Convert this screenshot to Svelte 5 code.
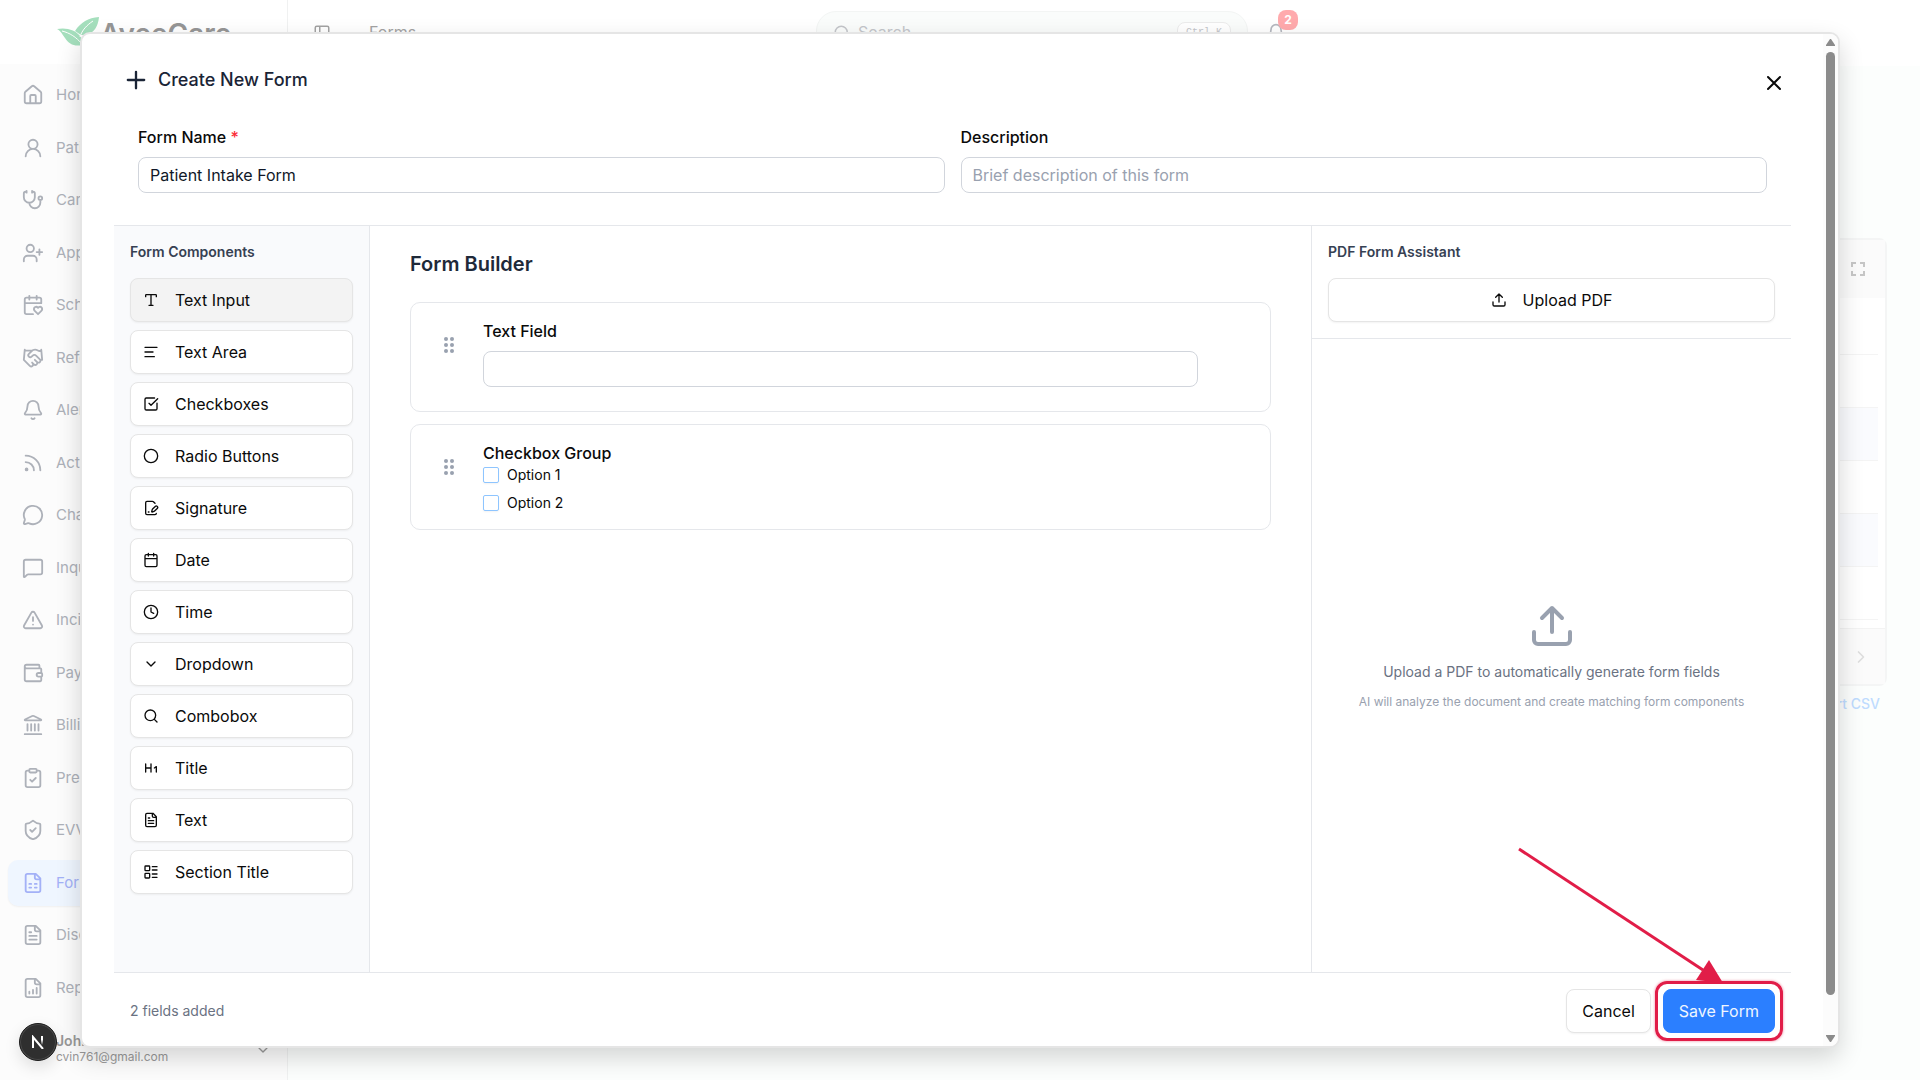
<script>
  const filePage = 'M15 2H6a2 2 0 0 0-2 2v16a2 2 0 0 0 2 2h12a2 2 0 0 0 2-2V7Z M14 2v4a2 2 0 0 0 2 2h4';
  const fileText = filePage + ' M10 9H8 M16 13H8 M16 17H8';
  const bell =
    'M10.268 21a2 2 0 0 0 3.464 0 M3.262 15.326A1 1 0 0 0 4 17h16a1 1 0 0 0 .74-1.673C19.41 13.956 18 12.499 18 8A6 6 0 0 0 6 8c0 4.499-1.411 5.956-2.738 7.326';
  const search = 'M19 11a8 8 0 1 1-16 0a8 8 0 0 1 16 0 M21 21l-4.34-4.34';
  const chevronDown = 'M6 9l6 6 6-6';
  const upload = 'M12 3v12 M17 8l-5-5-5 5 M21 15v4a2 2 0 0 1-2 2H5a2 2 0 0 1-2-2v-4';

  const nav = [
    { label: 'Home', d: 'M15 21v-8a1 1 0 0 0-1-1h-4a1 1 0 0 0-1 1v8 M3 10a2 2 0 0 1 .709-1.528l7-5.999a2 2 0 0 1 2.582 0l7 5.999A2 2 0 0 1 21 10v9a2 2 0 0 1-2 2H5a2 2 0 0 1-2-2z' },
    { label: 'Patients', d: 'M17 8a5 5 0 1 1-10 0a5 5 0 0 1 10 0 M20 21a8 8 0 0 0-16 0' },
    { label: 'Caregivers', d: 'M11 2v2 M5 2v2 M5 3H4a2 2 0 0 0-2 2v4a6 6 0 0 0 12 0V5a2 2 0 0 0-2-2h-1 M8 15a6 6 0 0 0 12 0v-3 M22 10a2 2 0 1 1-4 0a2 2 0 0 1 4 0' },
    { label: 'Applicants', d: 'M16 21v-2a4 4 0 0 0-4-4H6a4 4 0 0 0-4 4v2 M13 7a4 4 0 1 1-8 0a4 4 0 0 1 8 0 M19 8v6 M22 11h-6' },
    { label: 'Schedule', d: 'M3 10h18V6a2 2 0 0 0-2-2H5a2 2 0 0 0-2 2v14a2 2 0 0 0 2 2h7 M8 2v4 M16 2v4 M21.29 14.7a2.43 2.43 0 0 0-2.65-.52c-.3.12-.57.3-.8.53l-.34.34-.35-.34a2.43 2.43 0 0 0-2.65-.53c-.3.12-.56.3-.79.53-.95.94-1 2.53.2 3.74L17.5 22l3.6-3.55c1.2-1.21 1.14-2.8.19-3.74Z' },
    { label: 'Referrals', d: 'M11 17l2 2a1 1 0 1 0 3-3 M14 14l2.5 2.5a1 1 0 1 0 3-3l-3.88-3.88a3 3 0 0 0-4.24 0l-.88.88a1 1 0 1 1-3-3l2.81-2.81a5.79 5.79 0 0 1 7.06-.87l.47.28a2 2 0 0 0 1.42.25L21 4 M21 3l1 11h-2 M3 3 2 14l6.5 6.5a1 1 0 1 0 3-3 M3 4h8' },
    { label: 'Alerts', d: bell },
    { label: 'Activity', d: 'M4 11a9 9 0 0 1 9 9 M4 4a16 16 0 0 1 16 16 M6 19a1 1 0 1 1-2 0a1 1 0 0 1 2 0' },
    { label: 'Chat', d: 'M2.992 16.342a2 2 0 0 1 .094 1.167l-1.065 3.29a1 1 0 0 0 1.236 1.168l3.413-.998a2 2 0 0 1 1.099.092 10 10 0 1 0-4.777-4.719' },
    { label: 'Inquiries', d: 'M22 17a2 2 0 0 1-2 2H6.828a2 2 0 0 0-1.414.586l-2.202 2.202A.71.71 0 0 1 2 21.286V5a2 2 0 0 1 2-2h16a2 2 0 0 1 2 2z' },
    { label: 'Incidents', d: 'M21.73 18l-8-14a2 2 0 0 0-3.48 0l-8 14A2 2 0 0 0 4 21h16a2 2 0 0 0 1.73-3 M12 9v4 M12 17h.01' },
    { label: 'Payroll', d: 'M19 7V4a1 1 0 0 0-1-1H5a2 2 0 0 0 0 4h15a1 1 0 0 1 1 1v4h-3a2 2 0 0 0 0 4h3a1 1 0 0 0 1-1v-2a1 1 0 0 0-1-1 M3 5v14a2 2 0 0 0 2 2h15a1 1 0 0 0 1-1v-4' },
    { label: 'Billing', d: 'M10 18v-7 M11.12 2.198a2 2 0 0 1 1.76.006l7.866 3.847c.476.233.31.949-.22.949H3.474c-.53 0-.695-.716-.22-.949z M14 18v-7 M18 18v-7 M3 22h18 M6 18v-7' },
    { label: 'Prescriptions', d: 'M9 2h6a1 1 0 0 1 1 1v2a1 1 0 0 1-1 1H9a1 1 0 0 1-1-1V3a1 1 0 0 1 1-1z M16 4h2a2 2 0 0 1 2 2v14a2 2 0 0 1-2 2H6a2 2 0 0 1-2-2V6a2 2 0 0 1 2-2h2 M9 14l2 2 4-4' },
    { label: 'EVV', d: 'M20 13c0 5-3.5 7.5-7.66 8.95a1 1 0 0 1-.67-.01C7.5 20.5 4 18 4 13V6a1 1 0 0 1 1-1c2 0 4.5-1.2 6.24-2.72a1.17 1.17 0 0 1 1.52 0C14.51 3.81 17 5 19 5a1 1 0 0 1 1 1z M9 12l2 2 4-4' },
    { label: 'Forms', active: true, d: filePage + ' M8 13h2 M14 13h2 M8 17h2 M14 17h2' },
    { label: 'Discharges', d: fileText },
    { label: 'Reports', d: filePage + ' M8 18v-2 M12 18v-4 M16 18v-6' }
  ];

  const components = [
    { label: 'Text Input', d: 'M12 4v16 M4 7V5a1 1 0 0 1 1-1h14a1 1 0 0 1 1 1v2 M9 20h6' },
    { label: 'Text Area', d: 'M21 5H3 M15 12H3 M17 19H3' },
    { label: 'Checkboxes', d: 'M21 10.656V19a2 2 0 0 1-2 2H5a2 2 0 0 1-2-2V5a2 2 0 0 1 2-2h12.344 M9 11l3 3L22 4' },
    { label: 'Radio Buttons', d: 'M22 12a10 10 0 1 1-20 0a10 10 0 0 1 20 0' },
    { label: 'Signature', d: 'M18 5l-2.414-2.414A2 2 0 0 0 14.172 2H6a2 2 0 0 0-2 2v16a2 2 0 0 0 2 2h12a2 2 0 0 0 2-2 M21.378 12.626a1 1 0 0 0-3.004-3.004l-4.01 4.012a2 2 0 0 0-.506.854l-.837 2.87a.5.5 0 0 0 .62.62l2.87-.837a2 2 0 0 0 .854-.506z M8 18h1' },
    { label: 'Date', d: 'M8 2v4 M16 2v4 M5 4h14a2 2 0 0 1 2 2v14a2 2 0 0 1-2 2H5a2 2 0 0 1-2-2V6a2 2 0 0 1 2-2z M3 10h18' },
    { label: 'Time', d: 'M22 12a10 10 0 1 1-20 0a10 10 0 0 1 20 0 M12 6v6l4 2' },
    { label: 'Dropdown', d: chevronDown },
    { label: 'Combobox', d: search },
    { label: 'Title', d: 'M4 12h8 M4 18V6 M12 18V6 M17 12l3-2v8' },
    { label: 'Text', d: fileText },
    { label: 'Section Title', d: 'M4 3h5a1 1 0 0 1 1 1v5a1 1 0 0 1-1 1H4a1 1 0 0 1-1-1V4a1 1 0 0 1 1-1z M4 14h5a1 1 0 0 1 1 1v5a1 1 0 0 1-1 1H4a1 1 0 0 1-1-1v-5a1 1 0 0 1 1-1z M14 4h7 M14 9h7 M14 15h7 M14 20h7' }
  ];

  let selected = $state('Text Input');
  let formName = $state('Patient Intake Form');
  let description = $state('');
</script>

{#snippet icon(d, size)}
  <svg class="icon" width={size} height={size} viewBox="0 0 24 24" aria-hidden="true"><path {d} /></svg>
{/snippet}

{#snippet grip()}
  <svg class="grip" width="20" height="20" viewBox="0 0 20 20" aria-hidden="true">
    <circle cx="7" cy="4" r="2" /><circle cx="13" cy="4" r="2" />
    <circle cx="7" cy="10" r="2" /><circle cx="13" cy="10" r="2" />
    <circle cx="7" cy="16" r="2" /><circle cx="13" cy="16" r="2" />
  </svg>
{/snippet}

<div class="app">
  <aside class="sidebar">
    <div class="brand">
      <svg width="43" height="30" viewBox="0 0 43 30" aria-hidden="true">
        <path class="leaf" d="M0 12C9 10 19 13 23 19c3 4 3 7 3 9-9 2-14-1-18-7-3-4-4-7-8-9z" />
        <path class="leaf" d="M42 0c-1 10-5 18-18 18-2-1-4-3-6-4C24 5 31 1 42 0z" />
        <path class="vein" d="M5 14c8 2 14 6 20 13M36 4c-6 4-11 9-13 16" />
      </svg>
      <span>AveeCare</span>
    </div>
    <nav>
      {#each nav as item}
        <a href="#{item.label.toLowerCase()}" class:active={item.active}>
          {@render icon(item.d, 22)}<span>{item.label}</span>
        </a>
      {/each}
    </nav>
    <div class="account">
      <div class="who"><strong>John</strong><span>cvin761@gmail.com</span></div>
      {@render icon(chevronDown, 16)}
    </div>
  </aside>

  <div class="main">
    <header class="topbar">
      {@render icon('M5 3h14a2 2 0 0 1 2 2v14a2 2 0 0 1-2 2H5a2 2 0 0 1-2-2V5a2 2 0 0 1 2-2z M9 3v18', 18)}
      <span class="crumb">Forms</span>
      <div class="search">
        {@render icon(search, 18)}
        <input type="search" placeholder="Search" aria-label="Search" />
        <kbd>Ctrl K</kbd>
      </div>
      <button class="alerts" type="button" aria-label="Notifications">
        {@render icon(bell, 20)}
        <span class="badge">2</span>
      </button>
    </header>
    <div class="content">
      <section class="list">
        <div class="list-head">
          <svg width="14" height="14" viewBox="0 0 14 14" aria-hidden="true"><path d="M1 5V1h4M9 1h4v4M13 9v4H9M5 13H1V9" /></svg>
        </div>
        <div class="rows">
          {#each Array(6) as _}<div class="row"></div>{/each}
        </div>
        <div class="list-foot">{@render icon('M9 6l6 6-6 6', 20)}</div>
      </section>
      <a class="export" href="#export">Export CSV</a>
    </div>
  </div>

  <div class="overlay">
    <div class="modal" role="dialog" aria-modal="true" aria-labelledby="dialog-title">
      <div class="scroll">
        <header class="modal-head">
          <h2 id="dialog-title">{@render icon('M5 12h14 M12 5v14', 28)}Create New Form</h2>
          <button class="close" type="button" aria-label="Close">{@render icon('M18 6L6 18 M6 6l12 12', 24)}</button>
        </header>

        <div class="fields">
          <div class="field">
            <label for="form-name">Form Name <span class="required">*</span></label>
            <input id="form-name" type="text" bind:value={formName} />
          </div>
          <div class="field">
            <label for="form-description">Description</label>
            <input id="form-description" type="text" placeholder="Brief description of this form" bind:value={description} />
          </div>
        </div>

        <div class="builder">
          <section class="palette">
            <h3>Form Components</h3>
            {#each components as item}
              <button class="btn" class:selected={selected === item.label} type="button" onclick={() => (selected = item.label)}>
                {@render icon(item.d, 16)}{item.label}
              </button>
            {/each}
          </section>

          <section class="canvas">
            <h3>Form Builder</h3>
            <div class="card">
              {@render grip()}
              <div class="field card-field">
                <label for="text-field">Text Field</label>
                <input id="text-field" type="text" />
              </div>
            </div>
            <div class="card">
              {@render grip()}
              <fieldset>
                <legend>Checkbox Group</legend>
                <label><input type="checkbox" />Option 1</label>
                <label><input type="checkbox" />Option 2</label>
              </fieldset>
            </div>
          </section>

          <section class="assistant">
            <div class="assistant-head">
              <h3>PDF Form Assistant</h3>
              <button class="btn centered" type="button">{@render icon(upload, 16)}Upload PDF</button>
            </div>
            <div class="empty">
              {@render icon(upload, 48)}
              <p>Upload a PDF to automatically generate form fields</p>
              <small>AI will analyze the document and create matching form components</small>
            </div>
          </section>
        </div>

        <footer class="modal-foot">
          <span>2 fields added</span>
          <button class="btn" type="button">Cancel</button>
          <div class="callout">
            <button class="btn save" type="button">Save Form</button>
            <div class="ring"></div>
            <svg class="arrow" width="208" height="138" viewBox="0 0 208 138" aria-hidden="true">
              <path class="shaft" d="M2 2L186 123" />
              <path class="tip" d="M192 113L206 136L179 133Z" />
            </svg>
          </div>
        </footer>
      </div>
      <div class="scrollbar" aria-hidden="true">
        <svg width="9" height="7" viewBox="0 0 9 7"><path d="M4 0h1l4 6v1H0V6z" /></svg>
        <div class="track"><div class="thumb"></div></div>
        <svg width="9" height="7" viewBox="0 0 9 7"><path d="M0 0h9v1L5 7H4L0 1z" /></svg>
      </div>
    </div>
  </div>

  <div class="dev-badge">
    <svg width="14" height="14" viewBox="0 0 14 14" aria-hidden="true">
      <defs>
        <linearGradient id="fade" x1="0" y1="0" x2="0" y2="1">
          <stop offset="0.4" stop-color="#fff" /><stop offset="1" stop-color="#fff" stop-opacity="0" />
        </linearGradient>
      </defs>
      <path d="M2 13V2L12 14" fill="none" stroke="#fff" stroke-width="2" />
      <rect x="10" y="1" width="2" height="9" fill="url(#fade)" />
    </svg>
  </div>
</div>

<style>
  :global(body) {
    margin: 0;
  }
  .app,
  .app * {
    box-sizing: border-box;
  }
  .app {
    position: relative;
    display: flex;
    height: 100vh;
    overflow: hidden;
    background: #fcfefd;
    color: #0a0a0a;
    font: 400 16px/24px Inter, 'Liberation Sans', sans-serif;
  }
  button,
  input {
    font: inherit;
    color: inherit;
  }
  button {
    cursor: pointer;
  }
  h2,
  h3,
  p {
    margin: 0;
  }
  .icon {
    flex: none;
    fill: none;
    stroke: currentColor;
    stroke-width: 2;
    stroke-linecap: round;
    stroke-linejoin: round;
  }

  /* Page behind the dialog, washed out */
  .sidebar {
    display: flex;
    flex: none;
    flex-direction: column;
    width: 288px;
    border-right: 1px solid #f0f1f1;
    background: #fcfcfc;
    color: #adb1b9;
  }
  .brand {
    display: flex;
    align-items: center;
    height: 64px;
    padding-left: 57px;
    background: #fff;
    color: #969696;
    font-size: 28px;
    font-weight: 600;
  }
  .brand span {
    padding-top: 4px;
  }
  .leaf {
    fill: #a5dfbd;
  }
  .vein {
    fill: none;
    stroke: #fff;
    stroke-width: 1;
  }
  nav {
    display: flex;
    flex: 1;
    flex-direction: column;
    justify-content: space-between;
    padding: 8px 8px 0;
  }
  nav a {
    display: flex;
    gap: 12px;
    align-items: center;
    height: 46px;
    padding-left: 14px;
    border-radius: 10px;
    color: inherit;
    font-size: 15px;
    text-decoration: none;
  }
  nav a.active {
    background: #eff6ff;
    box-shadow: 0 1px 2px rgba(0, 0, 0, 0.05);
    color: #a3b1f7;
  }
  .account {
    display: flex;
    align-items: center;
    justify-content: space-between;
    height: 69px;
    padding: 8px 16px 0 56px;
    color: #999;
  }
  .who {
    display: flex;
    flex-direction: column;
    padding-bottom: 2px;
    font-size: 12px;
    line-height: 16px;
  }
  .who strong {
    font-size: 14px;
    font-weight: 600;
  }
  .main {
    display: flex;
    flex: 1;
    flex-direction: column;
    min-width: 0;
  }
  .topbar {
    display: flex;
    align-items: center;
    height: 66px;
    padding-left: 25px;
    background: #fff;
    color: #a3a3a3;
  }
  .crumb {
    flex: 0 1 485px;
    padding: 0 0 2px 38px;
  }
  .search {
    display: flex;
    flex: none;
    gap: 7px;
    align-items: center;
    width: 432px;
    height: 44px;
    padding: 0 16px;
    border: 1px solid #f3f5f4;
    border-radius: 20px;
    background: #fafcfb;
    color: #c4c6ca;
  }
  .search input {
    flex: 1;
    min-width: 0;
    padding: 0 0 2px;
    border: 0;
    background: none;
  }
  .search input::placeholder {
    color: #c4c6ca;
  }
  kbd {
    padding: 0 8px;
    border: 1px solid #ececec;
    border-radius: 8px;
    background: #fff;
    font: 10px/20px 'Liberation Mono', monospace;
  }
  .alerts {
    position: relative;
    display: flex;
    margin-left: 18px;
    padding: 0;
    border: 0;
    background: none;
    color: #b5b8bf;
  }
  .badge {
    position: absolute;
    top: -13px;
    left: 12px;
    width: 20px;
    border-radius: 8px;
    background: #ffaaad;
    color: #fff;
    font-size: 12px;
    font-weight: 700;
    line-height: 20px;
    text-align: center;
  }
  .content {
    display: flex;
    flex-direction: column;
    gap: 8px;
    padding: 172px 33px 0 32px;
  }
  .list {
    border: 2px solid #f4f5f5;
    border-radius: 8px;
    background: #fff;
  }
  .list-head {
    display: flex;
    align-items: center;
    justify-content: flex-end;
    height: 58px;
    padding-right: 20px;
    background: #fbfbfb;
    fill: none;
    stroke: #c6c6c6;
    stroke-width: 2;
  }
  .rows {
    padding: 4px 7px 8px;
  }
  .row {
    height: 53px;
    border-bottom: 1px solid #f4f4f4;
  }
  .row:nth-child(odd):not(:first-child) {
    background: #fafbfe;
  }
  .list-foot {
    display: flex;
    align-items: center;
    justify-content: flex-end;
    height: 56px;
    padding-right: 14px;
    border-top: 1px solid #f3f3f3;
    background: #fbfbfb;
    color: #dedede;
  }
  .export {
    align-self: flex-end;
    margin-right: 7px;
    color: #bfdcff;
    font-size: 14px;
    font-weight: 500;
    line-height: 20px;
    text-decoration: none;
  }

  /* Dialog */
  .overlay {
    position: absolute;
    inset: 0;
    display: flex;
    padding: 32px 80px;
  }
  .modal {
    display: flex;
    flex: 1;
    min-width: 0;
    overflow: hidden;
    border: 2px solid #e5e5e5;
    border-radius: 10px;
    background: #fff;
    box-shadow: 0 10px 24px rgba(0, 0, 0, 0.16);
  }
  .scroll {
    flex: 1;
    min-width: 0;
    padding: 32px;
    overflow: auto;
    scrollbar-width: none;
  }
  .modal-head {
    display: flex;
    align-items: flex-start;
    justify-content: space-between;
    height: 35px;
    padding: 0 5px 0 8px;
  }
  h2 {
    display: flex;
    gap: 8px;
    color: #1a2436;
    font-size: 18px;
    font-weight: 500;
    line-height: 28px;
  }
  .close {
    display: flex;
    padding: 5px 0 0;
    border: 0;
    background: none;
  }
  .fields {
    display: grid;
    grid-template-columns: 1fr 1fr;
    gap: 16px;
    padding: 24px 24px 32px;
  }
  .field {
    display: flex;
    flex-direction: column;
    gap: 8px;
  }
  .field label,
  legend {
    font-weight: 500;
  }
  .required {
    color: #fb2c36;
  }
  .field input {
    width: 100%;
    height: 36px;
    padding: 0 11px;
    border: 1px solid #d1d5dc;
    border-radius: 8px;
    background: #fff;
    outline: none;
  }
  #form-name {
    color: #101828;
  }
  .field input::placeholder {
    color: #99a1af;
  }
  .builder {
    display: flex;
    height: calc(100vh - 333px);
    border-top: 1px solid #e5e7eb;
  }
  h3 {
    color: #364153;
    font-size: 14px;
    font-weight: 600;
    line-height: 20px;
  }
  .palette {
    display: flex;
    flex: 0 0 256px;
    flex-direction: column;
    gap: 8px;
    padding: 16px;
    border-right: 1px solid #e5e7eb;
    background: #f9fafc;
  }
  .palette h3 {
    margin-bottom: 8px;
  }
  .btn {
    display: flex;
    flex: none;
    gap: 16px;
    align-items: center;
    height: 44px;
    padding: 0 12px;
    border: 1px solid #e5e5e5;
    border-radius: 8px;
    background: #fff;
    box-shadow: 0 1px 2px rgba(0, 0, 0, 0.05);
  }
  .btn.selected {
    background: #f3f3f3;
  }
  .canvas {
    display: flex;
    flex: 1;
    flex-direction: column;
    gap: 12px;
    min-width: 0;
    padding: 24px 40px;
  }
  .canvas h3 {
    margin-bottom: 12px;
    color: #1e2939;
    font-size: 20px;
    line-height: 28px;
  }
  .card {
    display: flex;
    gap: 24px;
    align-items: flex-start;
    padding: 16px 72px 16px 28px;
    border: 1px solid #e5e7eb;
    border-radius: 10px;
    background: #fff;
  }
  .grip {
    flex: none;
    margin-top: 16px;
    fill: #99a1af;
  }
  .card-field {
    flex: 1;
    padding-bottom: 8px;
  }
  fieldset {
    display: flex;
    flex-direction: column;
    gap: 8px;
    margin: 0;
    padding: 0;
    border: 0;
  }
  legend {
    padding: 0;
  }
  fieldset label {
    display: flex;
    gap: 8px;
    align-items: center;
    font-size: 14px;
    line-height: 20px;
  }
  fieldset input {
    width: 16px;
    height: 16px;
    margin: 0;
    border: 1px solid #8ec5ff;
    border-radius: 2px;
    appearance: none;
    background: #fff;
    box-shadow: 0 1px 2px rgba(0, 0, 0, 0.05);
  }
  fieldset input:checked {
    background: #2b7fff;
  }
  .assistant {
    display: flex;
    flex: 0 0 480px;
    flex-direction: column;
    border-left: 1px solid #e5e7eb;
  }
  .assistant-head {
    display: flex;
    flex-direction: column;
    gap: 16px;
    padding: 16px;
    border-bottom: 1px solid #e5e7eb;
  }
  .centered {
    justify-content: center;
  }
  .empty {
    display: flex;
    flex: 1;
    flex-direction: column;
    gap: 12px;
    align-items: center;
    justify-content: center;
    color: #99a1af;
    text-align: center;
  }
  .empty p {
    color: #6a7282;
    font-size: 14px;
    line-height: 20px;
  }
  .empty small {
    font-size: 12px;
    line-height: 16px;
  }
  .modal-foot {
    display: flex;
    gap: 12px;
    align-items: center;
    padding: 16px;
    border-top: 1px solid #e5e7eb;
  }
  .modal-foot span {
    flex: 1;
    color: #6a7282;
    font-size: 14px;
  }
  .modal-foot .btn {
    padding: 0 15px;
  }
  .callout {
    position: relative;
  }
  .callout .save {
    border-color: #2b7fff;
    background: #2b7fff;
    box-shadow: none;
    color: #eff6ff;
  }
  .ring {
    position: absolute;
    inset: -8px;
    border: 3px solid #e11d48;
    border-radius: 12px;
    box-shadow: 0 0 2px 1px rgba(225, 29, 72, 0.25);
    pointer-events: none;
  }
  .arrow {
    position: absolute;
    top: -142px;
    left: -146px;
    pointer-events: none;
  }
  .shaft {
    stroke: #e11d48;
    stroke-width: 3;
  }
  .tip {
    fill: #e11d48;
  }
  .scrollbar {
    display: flex;
    flex: 0 0 15px;
    flex-direction: column;
    gap: 6px;
    align-items: center;
    padding: 5px 0 4px;
    background: #fcfcfc;
    fill: #8b8b8b;
  }
  .track {
    display: flex;
    flex: 1;
    width: 9px;
    padding-bottom: 34px;
  }
  .thumb {
    flex: 1;
    border-radius: 5px;
    background: #8b8b8b;
  }
  .dev-badge {
    position: absolute;
    bottom: 19px;
    left: 19px;
    display: flex;
    align-items: center;
    justify-content: center;
    width: 38px;
    height: 38px;
    border: 1px solid #1c1c1c;
    border-radius: 50%;
    background: #2f2f2f;
    box-shadow: inset 0 0 0 1px #4a4a4a, 0 6px 16px rgba(0, 0, 0, 0.12);
  }
</style>
